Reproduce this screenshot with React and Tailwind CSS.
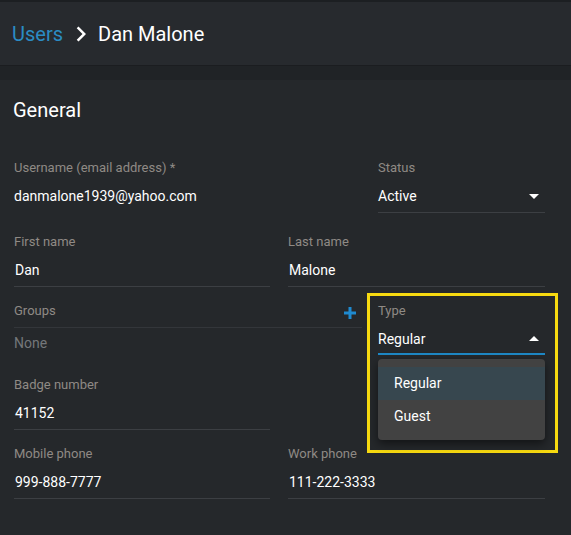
import React from "react";

function ArrowDrop({ up }) {
  return (
    <svg width="24" height="24" viewBox="0 0 24 24" className="shrink-0 -mr-[1px]">
      <path d={up ? "M7 14l5-5 5 5z" : "M7 10l5 5 5-5z"} fill="#ffffff" />
    </svg>
  );
}

function Field({ label, value, className = "" }) {
  return (
    <div className={`flex flex-col ${className}`}>
      <div className="h-4 text-[13px] leading-4 text-[#8f8a85]">{label}</div>
      <div className="mt-[10px] h-5 text-[14px] leading-5 text-white pl-[1px]">{value}</div>
      <div className="mt-[6px] border-b border-[#3c3f43]" />
    </div>
  );
}

export default function App() {
  return (
    <div
      className="w-[571px] h-[535px] overflow-hidden bg-[#202326] flex flex-col"
      style={{ fontFamily: "Roboto, 'Liberation Sans', sans-serif" }}
    >
      <div className="h-[2px] bg-[#1c1f22]" />
      <div className="h-[64px] bg-[#272a2e] flex items-center pl-3 text-[20px] border-b border-[#1b1d20]">
        <span className="text-[#2b8cc4]">Users</span>
        <svg width="30" height="30" viewBox="0 0 24 24" className="ml-[3px] mr-[2px]">
          <path d="M10 6 8.59 7.41 13.17 12l-4.58 4.59L10 18l6-6z" fill="#ffffff" />
        </svg>
        <span className="text-white">Dan Malone</span>
      </div>
      <div className="h-[14px] bg-[#202326]" />
      <div className="flex-1 bg-[#25282b] pl-[14px] pr-[26px] pt-4">
        <div className="h-7 text-[20px] leading-7 text-white -ml-[1px]">General</div>

        {/* row 1 */}
        <div className="flex mt-[36px]">
          <div className="flex-1 flex flex-col">
            <div className="h-4 text-[13px] leading-4 text-[#8f8a85]">Username (email address) *</div>
            <div className="mt-[10px] h-5 text-[14px] leading-5 text-white">danmalone1939@yahoo.com</div>
          </div>
          <div className="w-[167px] flex flex-col">
            <div className="h-4 text-[13px] leading-4 text-[#8f8a85]">Status</div>
            <div className="mt-[8px] h-6 flex items-center justify-between text-[14px] text-white">
              <span>Active</span>
              <ArrowDrop />
            </div>
            <div className="mt-[4px] border-b border-[#3c3f43]" />
          </div>
        </div>

        {/* row 2 */}
        <div className="flex gap-[18px] mt-[21px]">
          <Field label="First name" value="Dan" className="w-[256px]" />
          <Field label="Last name" value="Malone" className="flex-1" />
        </div>

        {/* row 3 */}
        <div className="flex mt-[16px] gap-4">
          <div className="flex-1 flex flex-col">
            <div className="h-4 flex items-center justify-between text-[13px] text-[#8f8a85]">
              <span>Groups</span>
              <svg width="14" height="14" viewBox="0 0 14 14" className="mr-[5px] mt-[4px]">
                <path d="M5.5 1h3v4.5H13v3H8.5V13h-3V8.5H1v-3h4.5z" fill="#1f8ad0" />
              </svg>
            </div>
            <div className="mt-[8px] border-b border-[#33363a]" />
            <div className="mt-[5px] h-5 text-[14px] leading-5 text-[#74777a]">None</div>
          </div>
          <div className="w-[167px] relative flex flex-col">
            <div className="h-4 text-[13px] leading-4 text-[#8f8a85]">Type</div>
            <div className="mt-[8px] h-6 flex items-center justify-between text-[14px] text-white">
              <span>Regular</span>
              <ArrowDrop up />
            </div>
            <div className="mt-[2px] h-[2px] bg-[#1e88c5]" />
            <div className="absolute -left-[11px] -top-[10px] w-[191px] h-[160px] border-[3px] border-[#f7da10] pointer-events-none" />
            <div className="absolute left-0 right-0 top-[56px] bg-[#424242] rounded py-2 shadow-[0_4px_10px_rgba(0,0,0,0.5)] z-10">
              <div className="h-[33px] flex items-center pl-4 bg-[#37474f] text-[14px] text-white">Regular</div>
              <div className="h-[32px] flex items-center pl-4 text-[14px] text-white">Guest</div>
            </div>
          </div>
        </div>

        {/* row 4 */}
        <div className="flex mt-[22px]">
          <Field label="Badge number" value="41152" className="w-[256px]" />
        </div>

        {/* row 5 */}
        <div className="flex gap-[18px] mt-[16px]">
          <Field label="Mobile phone" value="999-888-7777" className="w-[256px]" />
          <Field label="Work phone" value="111-222-3333" className="flex-1" />
        </div>
      </div>
    </div>
  );
}
